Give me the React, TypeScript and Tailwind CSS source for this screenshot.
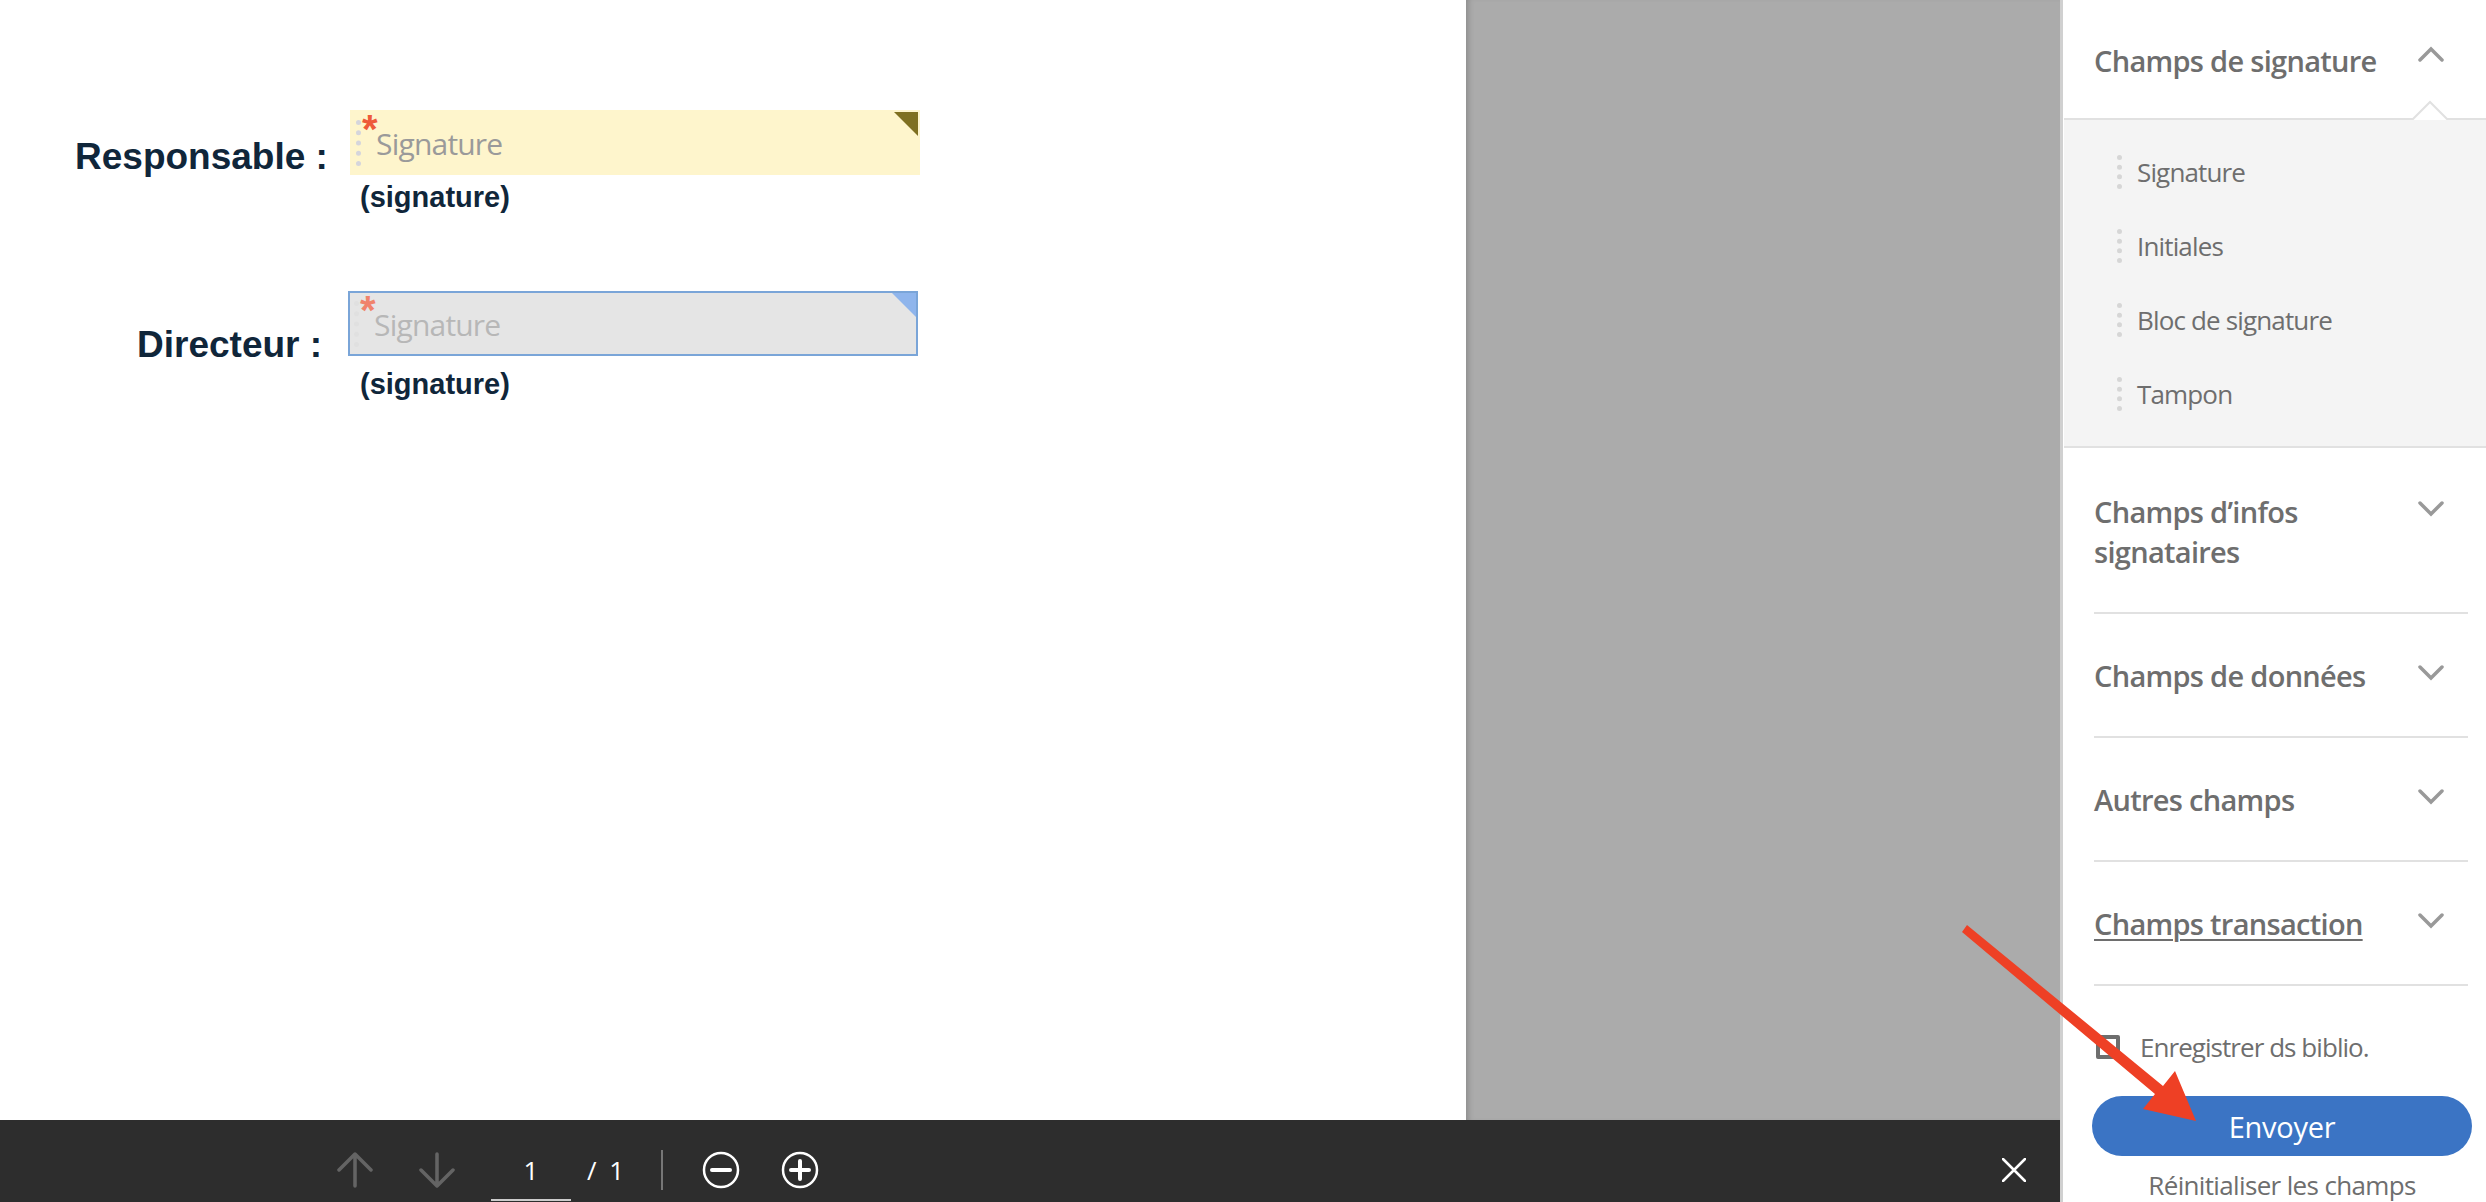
const sans = "font-['Open_Sans',sans-serif]";

function Chevron({ up = false }: { up?: boolean }) {
  return (
    <svg width="26" height="16" viewBox="0 0 26 16" fill="none" stroke="#999999" strokeWidth="3.5" strokeLinecap="round" strokeLinejoin="miter">
      <polyline points={up ? "2,14 13,3 24,14" : "2,2 13,13 24,2"} />
    </svg>
  );
}

function Field({ tone, star, text, bg, corner, frame = "" }: { tone: string; star: string; text: string; bg: string; corner: string; frame?: string }) {
  return (
    <div className={`relative w-[570px] h-[65px] flex items-start ${bg} ${frame}`}>
      <div className={`absolute left-[6px] top-[10px] h-[46px] border-l-[5px] border-dotted ${tone}`} />
      <span className={`absolute left-[12px] top-[-1px] font-['Liberation_Sans',sans-serif] font-bold text-[40px] leading-[40px] ${star}`}>*</span>
      <span className={`ml-[26px] mt-[14px] ${sans} font-normal text-[30px] leading-[40px] tracking-[-0.8px] ${text}`}>Signature</span>
      <svg className="absolute right-[2px] top-[2px]" width="24" height="24" viewBox="0 0 24 24">
        <polygon points="0,0 24,0 24,24" fill={corner} />
      </svg>
    </div>
  );
}

function Section({ label, underline = false, tall = false }: { label: string; underline?: boolean; tall?: boolean }) {
  return (
    <div className={`flex justify-between ml-[31px] mr-[18px] border-b-2 border-[#e1e1e1] ${tall ? "h-[166px] pt-[44px]" : "h-[124px] pt-[42px]"}`}>
      <div className={`${sans} font-semibold text-[29px] leading-[40px] tracking-[-0.7px] text-[#6e6e6e] w-[300px] ${underline ? "underline underline-offset-[4px] decoration-2" : ""}`}>
        {label}
      </div>
      <div className="mr-[24px] mt-[9px]">
        <Chevron />
      </div>
    </div>
  );
}

export default function App() {
  const fields = ["Signature", "Initiales", "Bloc de signature", "Tampon"];

  return (
    <div className="w-[2486px] h-[1202px] flex overflow-hidden bg-white">
      <div className="w-[2060px] flex flex-col">
        <div className="h-[1120px] flex">
          <main className="w-[1466px] bg-white pt-[110px] font-['Liberation_Sans',sans-serif] font-bold text-[#10263a]">
            <div className="flex items-start">
              <div className="w-[350px] pt-[25px] pl-[75px] text-[37px] leading-[44px]">Responsable :</div>
              <Field tone="border-[#d5d5dc]" star="text-[#ee5a3a]" text="text-[#9a9a9a]" bg="bg-[#fef5cc]" corner="#7f7020" />
            </div>
            <div className="ml-[360px] mt-[1px] text-[29px] leading-[34px]">(signature)</div>
            <div className="flex items-start mt-[77px]">
              <div className="w-[348px] pt-[32px] pl-[137px] text-[37px] leading-[44px]">Directeur :</div>
              <Field tone="border-[#e0e0e0]" star="text-[#f0836c]" text="text-[#b7b7b7]" bg="bg-[#e5e5e5]" corner="#8fb5ec" frame="shadow-[inset_0_0_0_2px_#7aa5d8]" />
            </div>
            <div className="ml-[360px] mt-[0px] text-[29px] leading-[34px]">(signature)</div>
          </main>
          <div className="flex-1 bg-[#ababab] shadow-[inset_6px_0_6px_-4px_rgba(0,0,0,0.2)]" />
        </div>
        <footer className="h-[82px] bg-[#2d2d2d] flex items-center pt-[18px] text-white">
          <svg className="ml-[337px] opacity-60" width="36" height="36" viewBox="0 0 36 36" fill="none" stroke="#8a8a8a" strokeWidth="3.5" strokeLinecap="round" strokeLinejoin="round">
            <path d="M18 34V2M2 18L18 2L34 18" />
          </svg>
          <svg className="ml-[46px] opacity-60" width="36" height="36" viewBox="0 0 36 36" fill="none" stroke="#8a8a8a" strokeWidth="3.5" strokeLinecap="round" strokeLinejoin="round">
            <path d="M18 2V34M2 18L18 34L34 18" />
          </svg>
          <div className={`ml-[36px] w-[80px] h-[63px] self-start border-b-2 border-[#cccccc] flex justify-center pt-[16px] ${sans} text-[26px] leading-[32px]`}>1</div>
          <div className={`ml-[16px] ${sans} text-[26px] leading-[32px] tracking-[3px]`}>/ 1</div>
          <div className="ml-[34px] w-[2px] h-[40px] bg-[#777777]" />
          <svg className="ml-[39px]" width="38" height="38" viewBox="0 0 38 38" fill="none" stroke="white" strokeLinecap="round">
            <circle cx="19" cy="19" r="17" strokeWidth="2.5" />
            <path d="M10 19H28" strokeWidth="4" />
          </svg>
          <svg className="ml-[41px]" width="38" height="38" viewBox="0 0 38 38" fill="none" stroke="white" strokeLinecap="round">
            <circle cx="19" cy="19" r="17" strokeWidth="2.5" />
            <path d="M10 19H28M19 10V28" strokeWidth="4" />
          </svg>
          <svg className="ml-auto mr-[34px]" width="24" height="24" viewBox="0 0 24 24" fill="none" stroke="white" strokeWidth="2.5" strokeLinecap="round">
            <path d="M1 1L23 23M23 1L1 23" />
          </svg>
        </footer>
      </div>

      <aside className="relative w-[426px] border-l-[3px] border-[#d0d0d0] bg-white flex flex-col">
        <div className="h-[118px] flex justify-between pl-[31px] pr-[42px] pt-[41px]">
          <div className={`${sans} font-semibold text-[29px] leading-[39px] tracking-[-0.7px] text-[#6e6e6e]`}>Champs de signature</div>
          <div className="mt-[5px]">
            <Chevron up />
          </div>
        </div>
        <div className="relative h-[330px] bg-[#f4f4f4] border-y-2 border-[#e1e1e1] ml-[1px] pt-[35px] flex flex-col gap-[40px]">
          <svg className="absolute left-[346px] top-[-20px]" width="40" height="22" viewBox="0 0 40 22">
            <polygon points="1,21 20,2 39,21" fill="#ffffff" stroke="#e1e1e1" strokeWidth="2" />
            <rect x="0" y="20" width="40" height="2" fill="#f4f4f4" />
          </svg>
          {fields.map((f) => (
            <div key={f} className="flex items-center h-[34px] pl-[53px] gap-[15px]">
              <div className="w-[5px] h-[34px] border-l-[5px] border-dotted border-[#d6d6d6]" />
              <span className={`${sans} text-[26px] leading-[34px] tracking-[-0.85px] text-[#6e6e6e]`}>{f}</span>
            </div>
          ))}
        </div>
        <Section label="Champs d’infos signataires" tall />
        <Section label="Champs de données" />
        <Section label="Autres champs" />
        <Section label="Champs transaction" underline />
        <div className="flex items-center ml-[33px] mt-[49px] h-[24px] gap-[20px]">
          <div className="w-[24px] h-[24px] border-[4px] border-[#6e6e6e] rounded-[2px]" />
          <span className={`${sans} text-[26px] leading-[34px] tracking-[-0.95px] text-[#6e6e6e]`}>Enregistrer ds biblio.</span>
        </div>
        <button className={`ml-[29px] mt-[37px] w-[380px] h-[60px] rounded-full bg-[#3b74c4] text-white pt-[2px] ${sans} text-[29px] leading-[58px] tracking-[-0.3px]`}>Envoyer</button>
        <div className={`mt-[12px] ml-[29px] w-[380px] text-center ${sans} text-[26px] leading-[34px] tracking-[-0.65px] text-[#6e6e6e]`}>Réinitialiser les champs</div>
      </aside>

      <svg className="absolute left-0 top-0 pointer-events-none" width="2486" height="1202" viewBox="0 0 2486 1202">
        <polygon points="1962,932 1967,925 2163,1086 2175,1071 2196,1121 2143,1109 2155,1094" fill="#ee4025" />
      </svg>
    </div>
  );
}
